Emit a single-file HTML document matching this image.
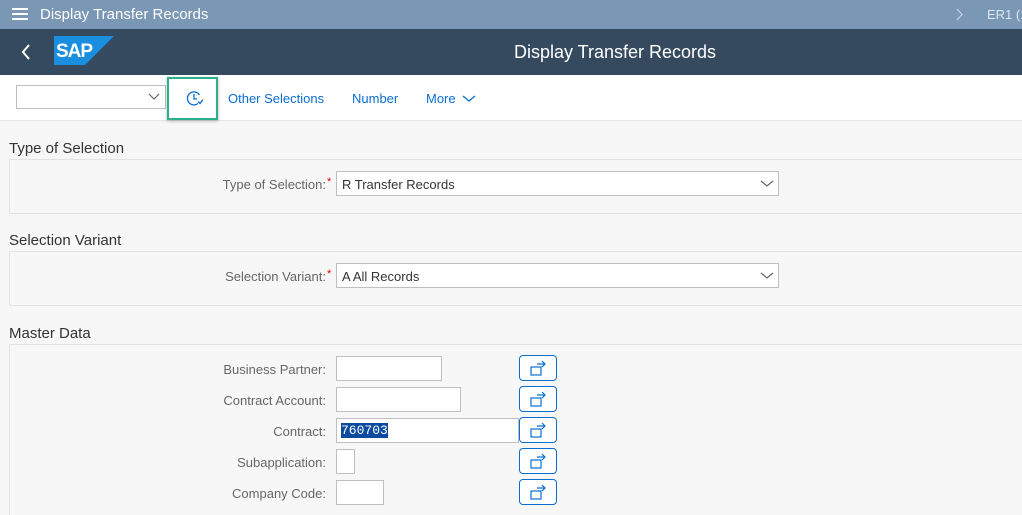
<!DOCTYPE html>
<html><head><meta charset="utf-8"><style>
*{box-sizing:border-box;margin:0;padding:0}
html,body{width:1022px;height:515px;overflow:hidden}
body{background:#f7f7f7;font-family:"Liberation Sans",Arial,sans-serif;position:relative}
.a{position:absolute}
.top{left:0;top:0;width:1022px;height:29px;background:#7a97b5;color:#fff}
.hdr{left:0;top:29px;width:1022px;height:46px;background:#354a5f}
.tb{left:0;top:75px;width:1022px;height:46px;background:#fff;border-bottom:1px solid #e4e4e4}
.lnk{color:#0a6ed1;font-size:13px;top:91px}
.h{font-size:15px;color:#333;left:9px}
.box{left:9px;width:1020px;border:1px solid #e2e2e2;background:#f7f7f7}
.lbl{font-size:13px;color:#666;text-align:right;width:320px;left:6px}
.inp{left:336px;height:25px;border:1px solid #bfbfbf;background:#fff;font-size:13px;color:#333;padding:5px 5px}
.btn{left:519px;width:38px;height:26px;border:1px solid #0a6ed1;border-radius:4px;background:#fff}
.star{color:#e00;font-size:11px}
</style></head><body>
<div class="a top">
 <div class="a" style="left:12px;top:8px;width:16px;height:2px;background:#fff;box-shadow:0 5px 0 #fff,0 10px 0 #fff"></div>
 <div class="a" style="left:40px;top:6px;font-size:15px">Display Transfer Records</div>
 <svg class="a" style="left:956px;top:8px" width="8" height="13"><path d="M1 1 L6 6.5 L1 12" stroke="#c5d3e2" stroke-width="1.2" fill="none"/></svg>
 <div class="a" style="left:987px;top:7px;font-size:13px;color:#dfe7ef;white-space:nowrap">ER1 (1</div>
</div>
<div class="a hdr">
 <svg class="a" style="left:20px;top:14px" width="12" height="18"><path d="M9 2 L3 9 L9 16" stroke="#fff" stroke-width="2" fill="none"/></svg>
 <svg class="a" style="left:54px;top:7px" width="60" height="29"><polygon points="0,0 60,0 31,29 0,29" fill="#1a8fe0"/><text x="2" y="21" font-family="Liberation Sans" font-weight="bold" font-size="19" fill="#fff" letter-spacing="-1">SAP</text></svg>
 <div class="a" style="left:0;width:1230px;top:13px;text-align:center;color:#fff;font-size:18px">Display Transfer Records</div>
</div>
<div class="a tb"></div>
<div class="a" style="left:16px;top:85px;width:150px;height:24px;border:1px solid #bfbfbf;background:#fff"></div>
<svg class="a" style="left:148px;top:93px" width="12" height="8"><path d="M1 1 L6 6 L11 1" stroke="#666" stroke-width="1.2" fill="none"/></svg>
<div class="a" style="left:167px;top:77px;width:51px;height:43px;border:2px solid #2bb08b;box-shadow:0 1px 3px rgba(0,0,0,.3);background:#fff"></div>
<svg class="a" style="left:185px;top:89px" width="20" height="20"><path d="M14.5 6 A6.5 6.5 0 1 0 13 14.5" stroke="#0a6ed1" stroke-width="1.3" fill="none"/><path d="M9 5 V10 H12" stroke="#0a6ed1" stroke-width="1.3" fill="none"/><path d="M13 12.5 L15 14.5 L18 10.5" stroke="#0a6ed1" stroke-width="1.3" fill="none"/></svg>
<div class="a lnk" style="left:228px">Other Selections</div>
<div class="a lnk" style="left:352px">Number</div>
<div class="a lnk" style="left:426px">More</div>
<svg class="a" style="left:462px;top:95px" width="14" height="8"><path d="M1 1 L7 6 L13 1" stroke="#0a6ed1" stroke-width="1.3" fill="none"/></svg>

<div class="a h" style="top:140px">Type of Selection</div>
<div class="a box" style="top:159px;height:55px"></div>
<div class="a lbl" style="top:177px">Type of Selection:</div><div class="a star" style="left:327px;top:176px">*</div>
<div class="a inp" style="top:171px;width:443px">R Transfer Records</div>
<svg class="a" style="left:760px;top:180px" width="14" height="8"><path d="M1 1 L7 6 L13 1" stroke="#666" stroke-width="1.2" fill="none"/></svg>

<div class="a h" style="top:232px">Selection Variant</div>
<div class="a box" style="top:251px;height:55px"></div>
<div class="a lbl" style="top:269px">Selection Variant:</div><div class="a star" style="left:327px;top:268px">*</div>
<div class="a inp" style="top:263px;width:443px">A All Records</div>
<svg class="a" style="left:760px;top:272px" width="14" height="8"><path d="M1 1 L7 6 L13 1" stroke="#666" stroke-width="1.2" fill="none"/></svg>

<div class="a h" style="top:325px">Master Data</div>
<div class="a box" style="top:344px;height:180px"></div>
<div class="a lbl" style="top:362px">Business Partner:</div><div class="a inp" style="top:356px;width:106px"></div>
<div class="a lbl" style="top:393px">Contract Account:</div><div class="a inp" style="top:387px;width:125px"></div>
<div class="a lbl" style="top:424px">Contract:</div><div class="a inp" style="top:418px;width:183px;padding:4px 4px;font-family:'Liberation Mono',monospace"><span style="background:#0b4a9e;color:#fff">760703</span></div>
<div class="a lbl" style="top:455px">Subapplication:</div><div class="a inp" style="top:449px;width:19px"></div>
<div class="a lbl" style="top:486px">Company Code:</div><div class="a inp" style="top:480px;width:48px"></div>
<svg width="0" height="0" style="position:absolute"><defs><g id="ic"><rect x="11" y="11" width="10" height="8" stroke="#0a6ed1" stroke-width="1.2" fill="none"/><path d="M17 8 H25 M22 5 L25 8 L22 11" stroke="#0a6ed1" stroke-width="1.2" fill="none"/></g></defs></svg>
<div class="a btn" style="top:355px"><svg width="36" height="24"><use href="#ic"/></svg></div>
<div class="a btn" style="top:386px"><svg width="36" height="24"><use href="#ic"/></svg></div>
<div class="a btn" style="top:417px"><svg width="36" height="24"><use href="#ic"/></svg></div>
<div class="a btn" style="top:448px"><svg width="36" height="24"><use href="#ic"/></svg></div>
<div class="a btn" style="top:479px"><svg width="36" height="24"><use href="#ic"/></svg></div>
</body></html>
